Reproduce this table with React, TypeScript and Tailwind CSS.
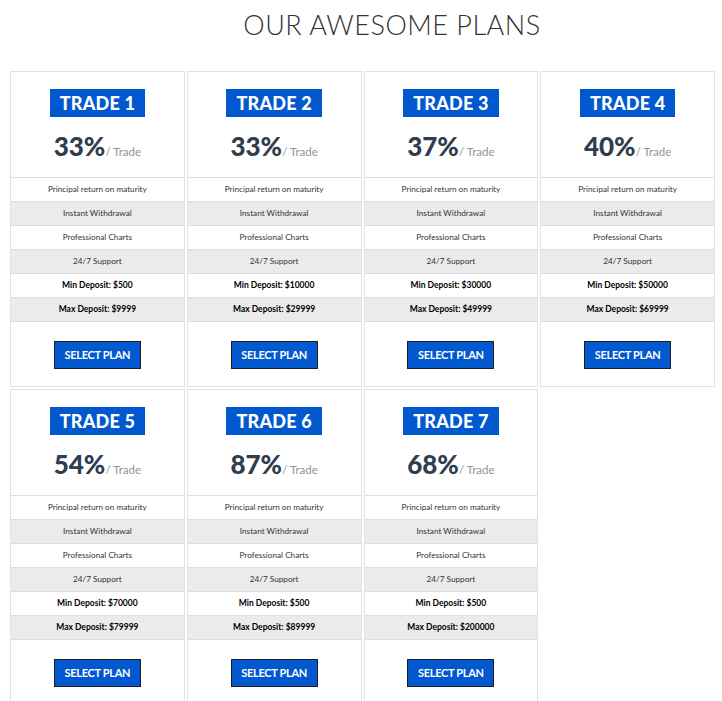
import React from "react";

const plans = [
  { name: "TRADE 1", rate: "33%", min: "$500", max: "$9999" },
  { name: "TRADE 2", rate: "33%", min: "$10000", max: "$29999" },
  { name: "TRADE 3", rate: "37%", min: "$30000", max: "$49999" },
  { name: "TRADE 4", rate: "40%", min: "$50000", max: "$69999" },
  { name: "TRADE 5", rate: "54%", min: "$70000", max: "$79999" },
  { name: "TRADE 6", rate: "87%", min: "$500", max: "$89999" },
  { name: "TRADE 7", rate: "68%", min: "$500", max: "$200000" },
];

const features = [
  "Principal return on maturity",
  "Instant Withdrawal",
  "Professional Charts",
  "24/7 Support",
];

const App: React.FC = () => {
  return (
    <div className="bg-white min-h-screen font-['Lato',sans-serif]">
      <h2 className="pl-[62px] pt-[9px] h-[71px] text-center text-[27px] font-light tracking-[0.5px] text-[#333] leading-[32px]">
        OUR AWESOME PLANS
      </h2>

      <div className="ml-[10px] w-[705px] grid grid-cols-4 gap-[2px]">
        {plans.map((plan) => (
          <div key={plan.name} className="border border-[#e2e2e2] bg-white flex flex-col">
            {/* header */}
            <div className="h-[105px] flex flex-col items-center pt-[17px]">
              <div className="bg-[#0158cf] text-white font-black text-[18px] leading-[28px] h-[28px] px-[10px] tracking-[0.2px]">
                {plan.name}
              </div>
              <div className="mt-[14px] flex items-baseline leading-[30px]">
                <span className="text-[26px] font-black text-[#2e3d4f]">{plan.rate}</span>
                <span className="text-[11.5px] text-[#939393]">/ Trade</span>
              </div>
            </div>

            {/* feature rows */}
            {features.map((f, i) => (
              <div
                key={f}
                className={`h-6 border-t border-[#dcdde1] flex items-center justify-center text-[8.2px] text-[#333] ${
                  i % 2 === 1 ? "bg-[#ebebeb]" : "bg-white"
                }`}
              >
                {f}
              </div>
            ))}
            <div className="h-6 border-t border-[#dcdde1] flex items-center justify-center text-[8.5px] font-bold text-black bg-white">
              Min Deposit: {plan.min}
            </div>
            <div className="h-6 border-t border-[#dcdde1] flex items-center justify-center text-[8.5px] font-bold text-black bg-[#ebebeb]">
              Max Deposit: {plan.max}
            </div>

            {/* button */}
            <div className="h-[65px] border-t border-[#dcdde1] flex justify-center pt-[19px]">
              <button className="h-[28px] w-[87px] bg-[#0158cf] border border-[#1d1d1d] text-white font-bold text-[11px] tracking-[-0.3px]">
                SELECT PLAN
              </button>
            </div>
          </div>
        ))}
      </div>
    </div>
  );
};

export default App;
